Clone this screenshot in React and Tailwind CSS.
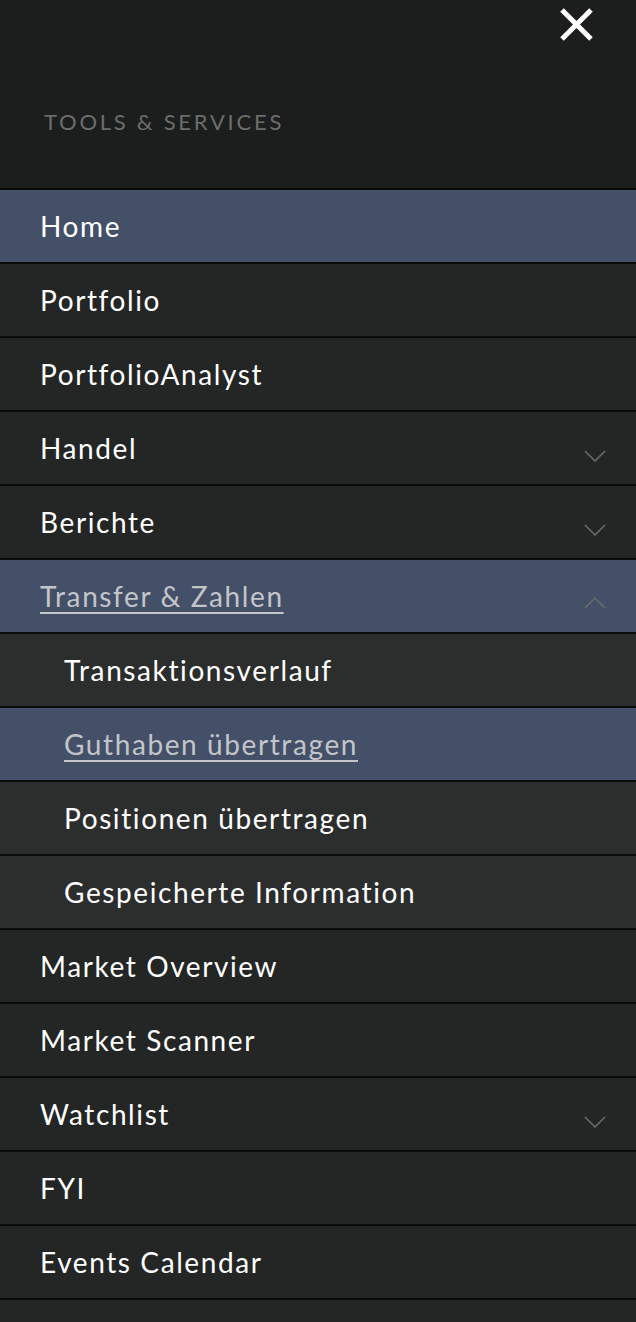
import React from "react";

const Chevron = ({ up }) => (
  <svg width="22" height="12" viewBox="0 0 22 12" className={up ? "mt-[14px]" : "mt-[16px]"}>
    <path
      d={up ? "M1 11 L11 1 L21 11" : "M1 1 L11 11 L21 1"}
      fill="none"
      stroke="#6a6c6c"
      strokeWidth="1.5"
    />
  </svg>
);

const items = [
  { label: "Home", active: true },
  { label: "Portfolio" },
  { label: "PortfolioAnalyst" },
  { label: "Handel", chevron: "down" },
  { label: "Berichte", chevron: "down" },
  { label: "Transfer & Zahlen", active: true, link: true, chevron: "up" },
  { label: "Transaktionsverlauf", sub: true },
  { label: "Guthaben übertragen", sub: true, active: true, link: true },
  { label: "Positionen übertragen", sub: true },
  { label: "Gespeicherte Information", sub: true },
  { label: "Market Overview" },
  { label: "Market Scanner" },
  { label: "Watchlist", chevron: "down" },
  { label: "FYI" },
  { label: "Events Calendar" },
  { label: "" },
];

export default function App() {
  return (
    <div
      className="w-[636px] h-[1322px] overflow-hidden bg-[#1c1d1d]"
      style={{ fontFamily: "Lato, 'Open Sans', Arial, sans-serif" }}
    >
      <div className="relative h-[188px]">
        <svg
          className="absolute left-[559px] top-[7px]"
          width="35"
          height="35"
          viewBox="0 0 35 35"
        >
          <path d="M3 3 L32 32 M32 3 L3 32" stroke="#ffffff" strokeWidth="5" strokeLinecap="butt" />
        </svg>
        <div className="pl-[44px] pt-[108px] text-[22px] leading-[28px] tracking-[2.75px] text-[#6b6d6d]">
          TOOLS &amp; SERVICES
        </div>
      </div>
      <div>
        {items.map((it, i) => (
          <div
            key={i}
            className={`h-[74px] border-t-2 border-[#0a0a0a] flex items-center justify-between pr-[30px] ${
              it.sub ? "pl-[64px]" : "pl-[40px]"
            } ${
              it.active ? "bg-[#435068]" : it.sub ? "bg-[#2c2e2e]" : "bg-[#242626]"
            }`}
          >
            <span
              className={`text-[28px] leading-[34px] tracking-[1.6px] ${
                it.link ? "text-[#c3c5c8] underline underline-offset-[5px] decoration-[2px]" : "text-white"
              }`}
            >
              {it.label}
            </span>
            {it.chevron && <Chevron up={it.chevron === "up"} />}
          </div>
        ))}
      </div>
    </div>
  );
}
